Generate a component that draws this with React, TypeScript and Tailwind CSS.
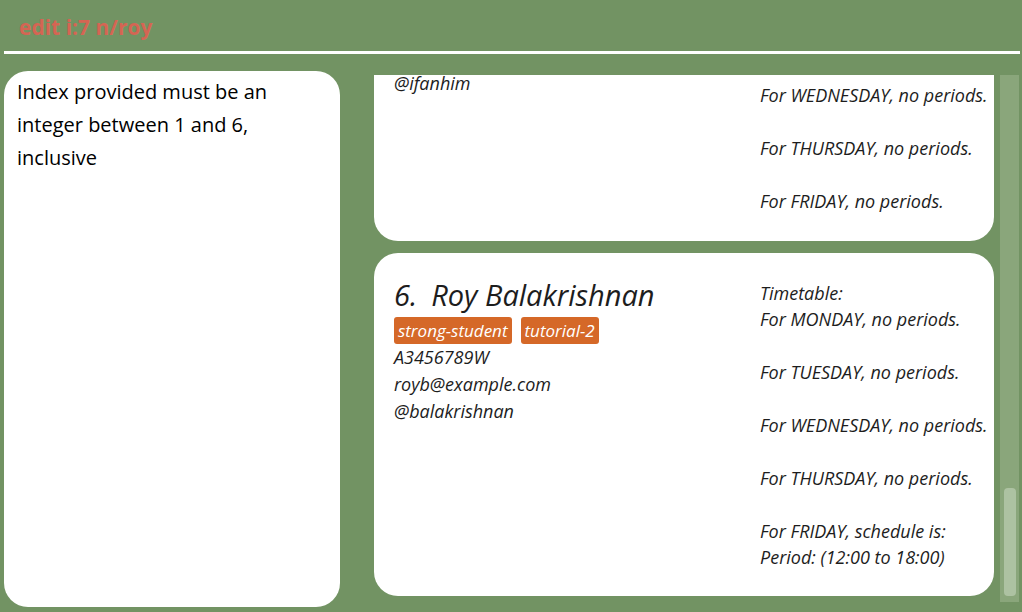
type Student = {
  index?: number;
  name?: string;
  tags: string[];
  details: string[];
  timetable: string[][];
};

const students: Student[] = [
  {
    tags: [],
    details: ["@ifanhim"],
    timetable: [
      ["For WEDNESDAY, no periods."],
      ["For THURSDAY, no periods."],
      ["For FRIDAY, no periods."],
    ],
  },
  {
    index: 6,
    name: "Roy Balakrishnan",
    tags: ["strong-student", "tutorial-2"],
    details: ["A3456789W", "royb@example.com", "@balakrishnan"],
    timetable: [
      ["Timetable:", "For MONDAY, no periods."],
      ["For TUESDAY, no periods."],
      ["For WEDNESDAY, no periods."],
      ["For THURSDAY, no periods."],
      ["For FRIDAY, schedule is:", "Period: (12:00 to 18:00)"],
    ],
  },
];

function StudentCard({ student }: { student: Student }) {
  const full = student.name !== undefined;
  return (
    <li
      className={
        full
          ? "flex rounded-3xl bg-white pt-[27px] pb-[26px] pl-5"
          : "flex rounded-b-3xl bg-white pb-[27px] pl-5"
      }
    >
      <div className="min-w-0 flex-1">
        {full && (
          <h2 className="flex gap-3.5 text-[29px] leading-[30px]">
            <span>{student.index}.</span>
            <span>{student.name}</span>
          </h2>
        )}
        {student.tags.length > 0 && (
          <ul className="mt-[7px] flex gap-[9px]">
            {student.tags.map((tag) => (
              <li
                key={tag}
                className="rounded-[3px] bg-[#d56828] px-1 text-[17px] leading-[27px] text-white"
              >
                {tag}
              </li>
            ))}
          </ul>
        )}
        {student.details.map((line) => (
          <p key={line} className={full ? "leading-[27px]" : "leading-4"}>
            {line}
          </p>
        ))}
      </div>
      <div
        className={
          full
            ? "flex w-[234px] shrink-0 flex-col gap-[27px] whitespace-nowrap"
            : "flex w-[234px] shrink-0 flex-col gap-[27px] pt-[7px] whitespace-nowrap"
        }
      >
        {student.timetable.map((day) => (
          <div key={day[0]}>
            {day.map((line) => (
              <p key={line} className="leading-[26px]">
                {line}
              </p>
            ))}
          </div>
        ))}
      </div>
    </li>
  );
}

export default function App() {
  return (
    <div className="flex h-screen flex-col overflow-hidden bg-[#729363] font-['Open_Sans','Noto_Sans',sans-serif]">
      <header className="mr-0.5 ml-1 border-b-[3px] border-white pt-[3px]">
        <input
          aria-label="Command"
          defaultValue="edit i:7 n/roy"
          className="block h-12 w-full bg-transparent px-[15px] text-[21px] font-bold text-[#d56553] outline-none"
        />
      </header>
      <main className="flex min-h-0 flex-1 pl-1">
        <textarea
          readOnly
          aria-label="Result"
          value="Index provided must be an integer between 1 and 6, inclusive"
          className="mt-[17px] mb-[5px] w-[33%] shrink-0 resize-none overflow-hidden rounded-3xl bg-white px-[13px] py-1 text-[20px] leading-[33px] text-black outline-none"
        />
        <section className="mt-[21px] mr-[3px] mb-2.5 ml-[34px] flex min-w-0 flex-1 gap-1.5 overflow-hidden">
          <ul className="flex min-w-0 flex-1 flex-col gap-3 text-[18px] text-[#1d1d1d] italic">
            {students.map((student) => (
              <StudentCard key={student.details[0]} student={student} />
            ))}
          </ul>
          <div className="flex w-[19px] flex-col justify-end bg-[#8aa67b] pr-[3px] pb-1.5 pl-1">
            <div className="h-[108px] rounded-sm bg-[#adc2a2]" />
          </div>
        </section>
      </main>
    </div>
  );
}
